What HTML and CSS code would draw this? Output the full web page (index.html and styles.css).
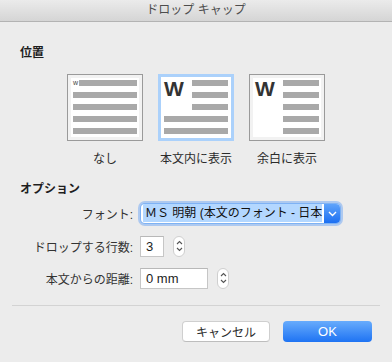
FILE: index.html
```html
<!DOCTYPE html>
<html lang="ja">
<head>
    <meta charset="UTF-8">
    <meta name="viewport" content="width=device-width, initial-scale=1.0">
    <title>ドロップ キャップ</title>
    <link rel="stylesheet" href="styles.css">
</head>
<body>
    <div class="titlebar">ドロップ キャップ</div>

    <div class="dialog">
        <h2 class="section">位置</h2>

        <div class="positions">
            <div class="pos">
                <div class="thumb">
                    <div class="first-row"><span class="mini-w">w</span><span class="bar"></span></div>
                    <span class="bar"></span>
                    <span class="bar"></span>
                    <span class="bar"></span>
                    <span class="bar"></span>
                </div>
                <div class="pos-label">なし</div>
            </div>

            <div class="pos">
                <div class="thumb thumb-cap selected">
                    <span class="big-w">W</span>
                    <span class="bar"></span>
                    <span class="bar"></span>
                    <span class="bar"></span>
                    <span class="bar wide"></span>
                    <span class="bar wide"></span>
                </div>
                <div class="pos-label">本文内に表示</div>
            </div>

            <div class="pos">
                <div class="thumb thumb-cap">
                    <span class="big-w margin-w">W</span>
                    <span class="bar"></span>
                    <span class="bar"></span>
                    <span class="bar"></span>
                    <span class="bar"></span>
                    <span class="bar"></span>
                </div>
                <div class="pos-label">余白に表示</div>
            </div>
        </div>

        <h2 class="section options-title">オプション</h2>

        <div class="form">
            <div class="row row-font">
                <label class="label">フォント:</label>
                <div class="select">
                    <span class="select-text"><span class="hl">ＭＳ 明朝 (本文のフォント - 日本</span></span>
                    <span class="select-arrow">
                        <svg width="9" height="6" viewBox="0 0 9 6"><path d="M1 1 L4.5 4.5 L8 1" fill="none" stroke="#fff" stroke-width="1.4"/></svg>
                    </span>
                </div>
            </div>

            <div class="row">
                <label class="label">ドロップする行数:</label>
                <div class="input input-small">3</div>
                <div class="stepper">
                    <svg width="7" height="14" viewBox="0 0 7 14"><path d="M1 5 L3.5 2.5 L6 5 M1 9 L3.5 11.5 L6 9" fill="none" stroke="#555" stroke-width="1.1"/></svg>
                </div>
            </div>

            <div class="row">
                <label class="label">本文からの距離:</label>
                <div class="input input-wide">0 mm</div>
                <div class="stepper">
                    <svg width="7" height="14" viewBox="0 0 7 14"><path d="M1 5 L3.5 2.5 L6 5 M1 9 L3.5 11.5 L6 9" fill="none" stroke="#555" stroke-width="1.1"/></svg>
                </div>
            </div>
        </div>

        <div class="separator"></div>

        <div class="buttons">
            <button type="button" class="btn">キャンセル</button>
            <button type="button" class="btn btn-primary">OK</button>
        </div>
    </div>
</body>
</html>
```

FILE: styles.css
```css
body {
    margin: 0;
    background-color: #ececec;
    font-family: "Liberation Sans", "Noto Sans CJK JP", sans-serif;
    font-size: 12px;
    color: #2b2b2b;
    width: 392px;
    height: 362px;
    overflow: hidden;
}

.titlebar {
    height: 21px;
    line-height: 21px;
    text-align: center;
    color: #4d4d4d;
    background: linear-gradient(#ebebeb, #d5d5d5);
    border-bottom: 1px solid #b3b3b3;
}

.section {
    margin: 23px 0 0 20px;
    font-size: 12px;
    line-height: 16px;
    font-weight: bold;
    color: #1e1e1e;
}

.options-title {
    margin-top: 14px;
}

.positions {
    display: flex;
    gap: 15px;
    margin: 13px 0 0 67px;
}

.pos {
    width: 76px;
    display: flex;
    flex-direction: column;
    align-items: center;
}

.thumb {
    width: 76px;
    height: 67px;
    box-sizing: border-box;
    border: 1px solid #9a9a9a;
    padding: 5px;
    background-color: #fff;
    box-shadow: inset 0 0 0 3px #f2f2f2;
    display: flex;
    flex-direction: column;
    gap: 6px;
}

.bar {
    display: block;
    height: 6px;
    background-color: #a9a9a9;
}

.first-row {
    display: flex;
    height: 6px;
}

.first-row .bar {
    flex: 1;
}

.mini-w {
    width: 6px;
    font-size: 7px;
    line-height: 5px;
    color: #444;
}

.thumb-cap {
    display: grid;
    grid-template-columns: 28px 1fr;
    grid-auto-rows: 6px;
    row-gap: 6px;
    column-gap: 0;
}

.thumb-cap .big-w {
    grid-row: 1 / span 3;
    grid-column: 1;
    font-size: 21px;
    font-weight: bold;
    line-height: 15px;
    margin-top: 1px;
    color: #333;
}

.thumb-cap .bar {
    grid-column: 2;
}

.thumb-cap .bar.wide {
    grid-column: 1 / span 2;
}

.margin-w {
    grid-row: 1 / span 5 !important;
}

.selected {
    border: 3px solid #abd1fb;
    padding: 3px;
    box-shadow: none;
}

.pos-label {
    margin-top: 10px;
    line-height: 16px;
    white-space: nowrap;
    color: #2b2b2b;
}

.form {
    display: flex;
    flex-direction: column;
}

.row {
    display: flex;
    align-items: center;
    height: 32px;
}

.row-font {
    height: 33px;
}

.label {
    width: 140px;
    text-align: right;
    padding-right: 7px;
    box-sizing: border-box;
    color: #333;
}

.select {
    width: 199px;
    height: 19px;
    margin-left: 1px;
    display: flex;
    background-color: #fff;
    border-radius: 4px;
    box-shadow: 0 0 0 1px #7eb2f4, 0 0 0 3px rgba(110, 166, 243, 0.5);
    overflow: hidden;
}

.select-text {
    flex: 1;
    overflow: hidden;
    white-space: nowrap;
    line-height: 19px;
    padding-left: 2px;
}

.hl {
    background-color: #b3d7ff;
    padding: 2px 0 2px 2px;
    color: #111;
}

.select-arrow {
    width: 16px;
    display: flex;
    align-items: center;
    justify-content: center;
    background: linear-gradient(#5ea3fb, #1c6ff1);
}

.input {
    height: 21px;
    box-sizing: border-box;
    border: 1px solid #c6c6c6;
    border-top-color: #b8b8b8;
    background-color: #fff;
    line-height: 19px;
    padding-left: 5px;
    font-size: 13px;
    color: #222;
}

.input-small {
    width: 24px;
}

.input-wide {
    width: 68px;
}

.stepper {
    width: 12px;
    height: 21px;
    box-sizing: border-box;
    margin-left: 9px;
    border: 1px solid #cfcfcf;
    border-radius: 6px;
    background-color: #fff;
    display: flex;
    align-items: center;
    justify-content: center;
}

.separator {
    height: 1px;
    margin: 11px 12px 0 12px;
    background-color: #d3d3d3;
}

.buttons {
    display: flex;
    justify-content: flex-end;
    gap: 13px;
    margin: 15px 20px 0 0;
}

.btn {
    width: 88px;
    height: 21px;
    padding: 0;
    font-family: "Liberation Sans", "Noto Sans CJK JP", sans-serif;
    font-size: 12px;
    color: #2b2b2b;
    background-color: #fff;
    border: 1px solid #cfcfcf;
    border-bottom-color: #bdbdbd;
    border-radius: 4px;
}

.btn-primary {
    width: 89px;
    font-size: 13px;
    color: #fff;
    border: none;
    background: linear-gradient(#68acfc, #1e73f3);
}
```
